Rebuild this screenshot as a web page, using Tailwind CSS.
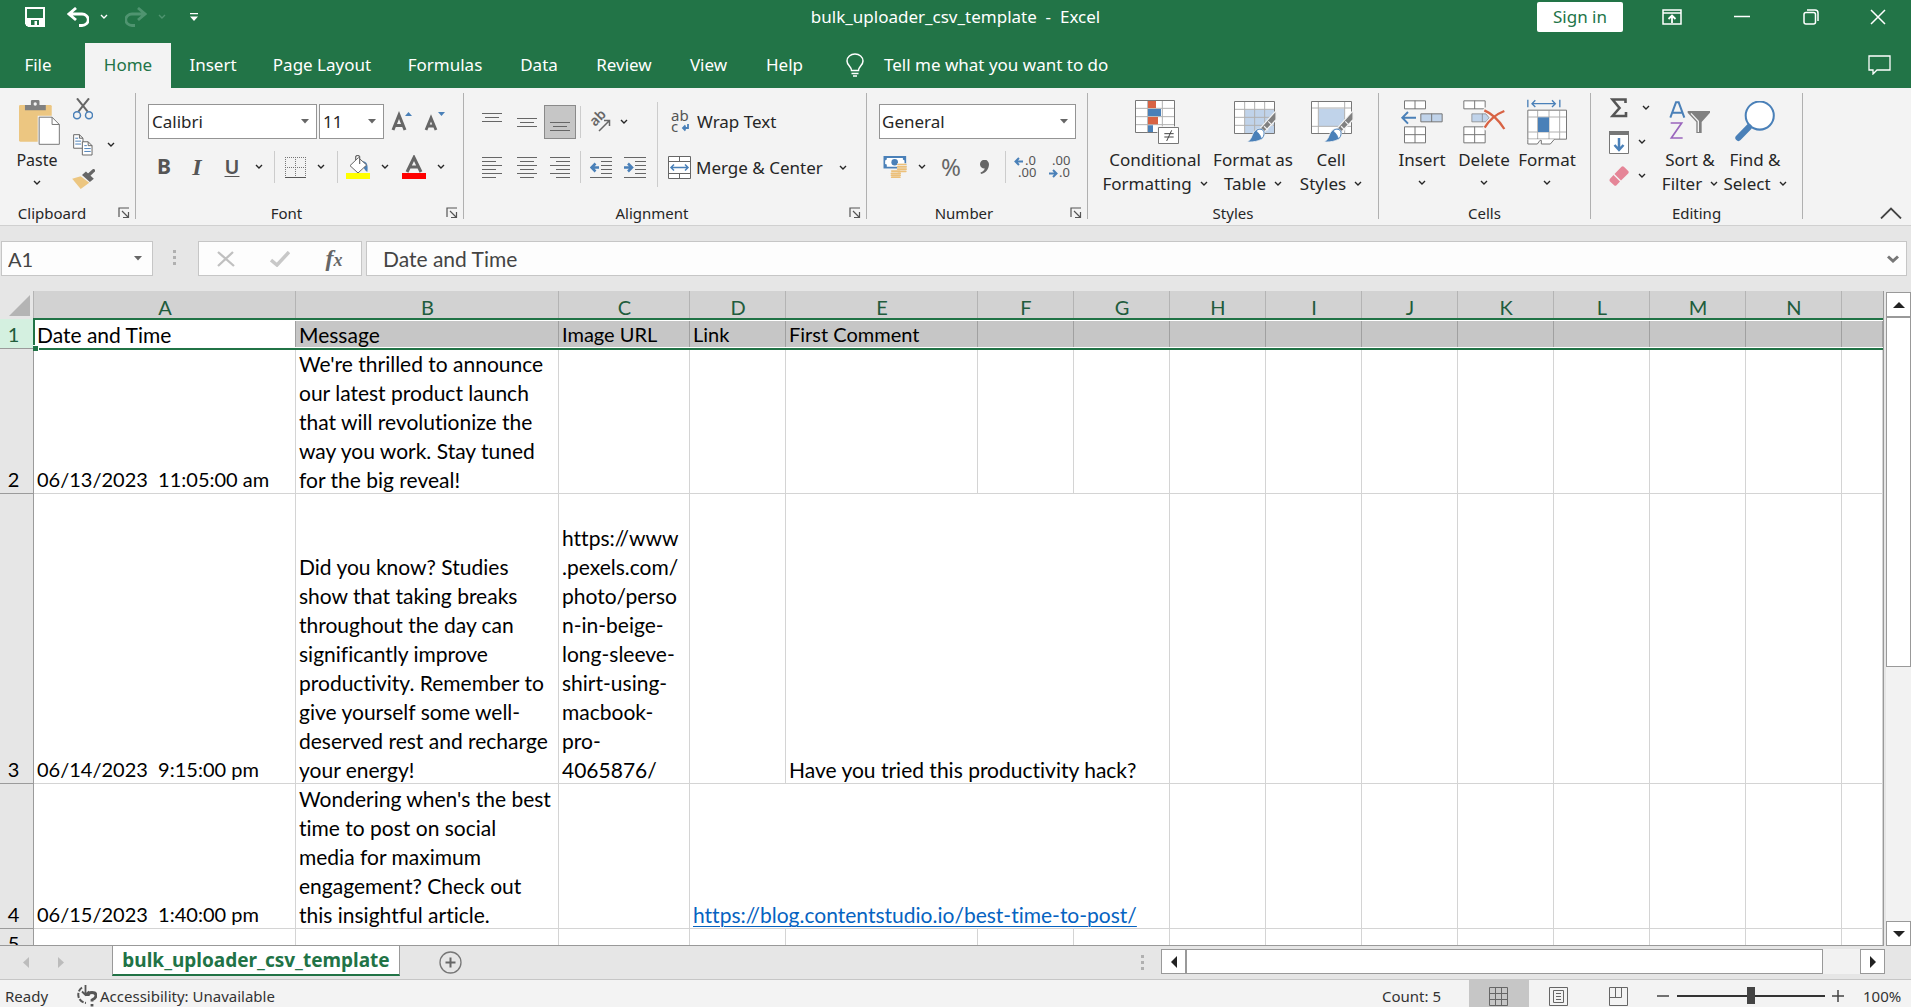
<!DOCTYPE html>
<html lang="en">
<head>
<meta charset="utf-8">
<title>bulk_uploader_csv_template - Excel</title>
<script src="https://cdn.jsdelivr.net/npm/@tailwindcss/browser@4"></script>
</head>
<body class="h-screen overflow-hidden bg-[#e6e6e6] text-[#262626]">
<svg class="hidden">
  <symbol id="chev" viewBox="0 0 8 6"><path d="M1 1l3 3 3-3" fill="none" stroke="currentColor" stroke-width="1.4"/></symbol>
  <symbol id="launch" viewBox="0 0 12 12"><path d="M1 10V1h10M4 4l6 6M10.500 5v5.500H5" fill="none" stroke="#555" stroke-width="1.200"/></symbol>
  <symbol id="tri" viewBox="0 0 8 5"><path d="M0 0h8L4 4.500z" fill="#666"/></symbol>
  <symbol id="brush" viewBox="0 0 100 108"><path d="M98 0v30L58 73 44 60z" fill="#808080" stroke="#f3f3f3" stroke-width="4"/><path d="M72 36l14 14M58 52l14 14" stroke="#f3f3f3" stroke-width="4"/><path d="M0 105c18-8 16-25 27-38 14-14 38-6 32 14-5 20-30 24-59 24z" fill="#4a80b8" stroke="#f3f3f3" stroke-width="3"/><path d="M32 68c8-10 25-8 26 6 0 9-3 16-9 20-3-12-9-18-17-26z" fill="#fff" stroke="#4a80b8" stroke-width="3"/></symbol>
</svg>
<div class="flex h-full flex-col font-['Noto_Sans','Open_Sans',sans-serif] text-[16px]">

  <!-- Title bar -->
  <header class="shrink-0 bg-[#227447] text-white">
    <div class="grid h-[43px] grid-cols-[1fr_auto_1fr] items-start">
      <div class="flex h-[34px] items-center pl-[25px]">
        <button aria-label="Save" class="mr-[22px]"><svg class="h-5 w-5" viewBox="0 0 20 20"><path fill="none" stroke="#fff" stroke-width="2" d="M1 1h18v18H3.500L1 16.500z"/><path fill="#fff" d="M1 11h18v8H1z"/><path fill="#227447" d="M6 13h8v5h-2v-4h-2.500v4H6z"/></svg></button>
        <button aria-label="Undo" class="mr-[11px]"><svg class="h-5 w-[22px]" viewBox="0 0 22 20"><path d="M9 1L2 7l7 6M2.500 7H15a6 5.500 0 0 1 0 11.500h-3" fill="none" stroke="#fff" stroke-width="2.800"/></svg></button>
        <button aria-label="Undo options" class="mr-[17px]"><svg class="h-[6px] w-2"><use href="#chev"/></svg></button>
        <button aria-label="Redo" class="mr-[11px] text-[#4f9470]"><svg class="h-5 w-[22px]" viewBox="0 0 22 20"><path d="M13 1l7 6-7 6M19.500 7H7a6 5.500 0 0 0 0 11.500h3" fill="none" stroke="currentColor" stroke-width="2.800"/></svg></button>
        <button aria-label="Redo options" class="mr-[24px] text-[#4f9470]"><svg class="h-[6px] w-2"><use href="#chev"/></svg></button>
        <button aria-label="Customize toolbar"><svg class="h-2 w-2" viewBox="0 0 8 8"><path fill="#fff" d="M0 0h8v1.300H0zM0 3.500h8L4 8z"/></svg></button>
      </div>
      <h1 class="h-[34px] text-[17px] leading-[34px] whitespace-pre">bulk_uploader_csv_template  -  Excel</h1>
      <div class="flex h-[34px] items-center justify-end">
        <button class="mr-[14px] h-[30px] w-[86px] rounded-[2px] bg-white text-[17px] text-[#227447]">Sign in</button>
        <button aria-label="Ribbon display options" class="grid h-[30px] w-[70px] place-items-center"><svg class="h-4 w-5" viewBox="0 0 20 16"><path d="M1 1h18v14H1zM1 4h18" fill="none" stroke="#fff" stroke-width="1.500"/><path d="M10 14V7M6.500 10L10 6.500l3.500 3.500" fill="none" stroke="#fff" stroke-width="1.800"/></svg></button>
        <button aria-label="Minimize" class="grid h-[30px] w-[69px] place-items-center"><svg class="h-4 w-4" viewBox="0 0 16 16"><path d="M0 7.500h16" stroke="#fff" stroke-width="1.500"/></svg></button>
        <button aria-label="Restore" class="grid h-[30px] w-[69px] place-items-center"><svg class="h-4 w-4" viewBox="0 0 16 16"><rect x="1" y="3.500" width="11.500" height="11.500" rx="2" fill="none" stroke="#fff" stroke-width="1.500"/><path d="M4 1h8q3 0 3 3v8" fill="none" stroke="#fff" stroke-width="1.500"/></svg></button>
        <button aria-label="Close" class="grid h-[30px] w-[66px] place-items-center"><svg class="h-4 w-4" viewBox="0 0 16 16"><path d="M1 1l14 14M15 1L1 15" stroke="#fff" stroke-width="1.500"/></svg></button>
      </div>
    </div>
    <nav class="flex h-[45px] items-stretch text-[17px] [&>button]:pb-[2px]">
      <button class="w-[85px] pr-[9px]">File</button>
      <button class="w-[86px] bg-[#f3f3f3] text-[#227447]">Home</button>
      <button class="w-[84px]">Insert</button>
      <button class="w-[134px]">Page Layout</button>
      <button class="w-[112px]">Formulas</button>
      <button class="w-[76px]">Data</button>
      <button class="w-[94px]">Review</button>
      <button class="w-[75px]">View</button>
      <button class="w-[77px]">Help</button>
      <button class="ml-[23px] flex items-center gap-5"><svg class="h-6 w-[18px]" viewBox="0 0 18 24"><path d="M5.500 17.500c0-4-4.500-5-4.500-9.500a8 7 0 0 1 16 0c0 4.500-4.500 5.500-4.500 9.500zM5.500 20.500h7M7 23h4" fill="none" stroke="#fff" stroke-width="1.500"/></svg><span>Tell me what you want to do</span></button>
      <button aria-label="Comments" class="ml-auto mr-[20px]"><svg class="h-5 w-[23px]" viewBox="0 0 23 20"><path d="M1 1h21v14H9l-4 4v-4H1z" fill="none" stroke="#fff" stroke-width="1.300"/></svg></button>
    </nav>
  </header>

  <!-- Ribbon -->
  <section class="flex h-[138px] shrink-0 border-b border-[#d0d0d0] bg-[#f3f3f3] whitespace-nowrap">
    <div class="flex w-[135px] shrink-0 flex-col">
      <div class="flex flex-1 pl-3">
        <button class="flex w-[50px] flex-col items-center pt-2 leading-6">
          <span class="grid h-[52px] place-items-center"><svg class="ml-1 h-[45px] w-[41px]" viewBox="60 297 124 136"><rect x="60" y="312" width="99" height="111" rx="4" fill="#ecc681"/><path d="M78 328v-16h18v-11q0-4 4-4h18q4 0 4 4v11h19v16z" fill="#808080"/><circle cx="109" cy="309" r="5" fill="#f3f3f3"/><path d="M119 347h41l24 24v62h-65z" fill="#fff" stroke="#f3f3f3" stroke-width="5"/><path d="M121 349h39l22 22v60h-61zM160 349v22h22" fill="#fff" stroke="#777" stroke-width="3"/></svg></span>
          <span>Paste</span><svg class="mt-2 h-[6px] w-2"><use href="#chev"/></svg>
        </button>
        <div class="flex flex-col pl-[9px] pt-1">
          <button aria-label="Cut" class="grid h-[34px] w-6 place-items-center"><svg class="h-[22px] w-5" viewBox="219 295 60 66"><path d="M231 296l32 40M267 296l-32 40" stroke="#666" stroke-width="6"/><circle cx="231" cy="347" r="10.500" fill="none" stroke="#4a80b8" stroke-width="4.500"/><circle cx="267" cy="347" r="10.500" fill="none" stroke="#4a80b8" stroke-width="4.500"/></svg></button>
          <div class="flex h-[38px] items-center"><button aria-label="Copy" class="grid w-6 place-items-center"><svg class="h-[22px] w-5" viewBox="221 398 62 68"><g fill="#fff" stroke="#666" stroke-width="3"><path d="M223 400h18l11 11v31h-29zM241 400v11h11"/><path d="M250 422h18l12 12v29h-30zM268 422v12h12"/></g><path d="M228 411h9M228 420h18M228 429h18M256 434h8M256 443h20M256 452h20" stroke="#4a80b8" stroke-width="3"/></svg></button><button aria-label="Copy options" class="grid w-[32px] place-items-center"><svg class="h-[6px] w-2"><use href="#chev"/></svg></button></div>
          <button aria-label="Format Painter" class="grid h-[30px] w-6 place-items-center"><svg class="h-5 w-[23px]" viewBox="217 506 69 61"><path d="M217 536l26-8 26 20-26 19z" fill="#ecc681"/><path d="M247 524l12-10 24 22-12 10z" fill="#666"/><path d="M266 526l16-15" stroke="#666" stroke-width="10" stroke-linecap="round"/></svg></button>
        </div>
      </div>
      <div class="flex h-6 items-center text-[15px]"><span class="flex-1 text-center">Clipboard</span><button aria-label="Clipboard settings" class="mr-[5px] w-[26px] pl-[14px]"><svg class="h-3 w-3"><use href="#launch"/></svg></button></div>
    </div>
    <div class="mb-[6px] mt-[5px] w-px shrink-0 bg-[#b0b0b0]"></div>

    <div class="flex w-[327px] shrink-0 flex-col">
      <div class="flex-1 pl-3 pt-4">
        <div class="flex h-[35px]">
          <div class="grid w-[169px] items-center border border-[#949494] bg-white"><select aria-label="Font" class="col-start-1 row-start-1 h-full w-full appearance-none bg-transparent pl-[3px] text-[17px]"><option>Calibri</option></select><svg class="col-start-1 row-start-1 mr-[7px] h-[5px] w-2 justify-self-end"><use href="#tri"/></svg></div>
          <div class="ml-[2px] grid w-[65px] items-center border border-[#949494] bg-white"><select aria-label="Font size" class="col-start-1 row-start-1 h-full w-full appearance-none bg-transparent pl-[3px] text-[17px]"><option>11</option></select><svg class="col-start-1 row-start-1 mr-[7px] h-[5px] w-2 justify-self-end"><use href="#tri"/></svg></div>
          <button aria-label="Increase font size" class="grid w-[35px] place-items-center"><svg class="h-6 w-6" viewBox="0 0 24 24"><path d="M3 20l6-15 6 15M5.500 15.500h7.500" fill="none" stroke="#666" stroke-width="3"/><path d="M15 6h7l-3.500-4z" fill="#4a80b8"/></svg></button>
          <button aria-label="Decrease font size" class="grid w-8 place-items-center"><svg class="h-6 w-6" viewBox="0 0 24 24"><path d="M3 20L8 8l5 12M5 16h6" fill="none" stroke="#666" stroke-width="2.800"/><path d="M15 2h7l-3.500 4z" fill="#4a80b8"/></svg></button>
        </div>
        <div class="mt-[11px] flex h-[34px] items-center text-[#555]">
          <button class="w-8 text-[21px] font-bold">B</button>
          <button class="w-[34px] font-['Liberation_Serif',serif] text-[24px] font-bold italic">I</button>
          <button class="w-9 text-[20px] font-semibold underline decoration-1 underline-offset-2">U</button>
          <button aria-label="Underline options" class="grid w-[18px] place-items-center text-[#262626]"><svg class="h-[6px] w-2"><use href="#chev"/></svg></button>
          <div class="mx-[6px] h-8 w-px bg-[#ccc]"></div>
          <button aria-label="Borders" class="grid w-7 place-items-center"><svg class="h-[21px] w-[21px]" viewBox="0 0 21 21"><path d="M0 .500h21M0 10.500h21M.500 0v20M10.500 0v20M20.500 0v20" fill="none" stroke="#777" stroke-dasharray="1 1"/><path d="M0 20.500h21" stroke="#555"/></svg></button>
          <button aria-label="Border options" class="grid w-6 place-items-center text-[#262626]"><svg class="h-[6px] w-2"><use href="#chev"/></svg></button>
          <div class="mx-1 h-8 w-px bg-[#ccc]"></div>
          <button aria-label="Fill color" class="grid w-8 place-items-center"><svg class="h-6 w-6" viewBox="1038 465 72 72"><path d="M1086 484c12-2 20 8 16 32-8-4-10-14-16-18z" fill="#4a80b8"/><path d="M1075 473l25 22-26 24-24-22z" fill="#fff" stroke="#666" stroke-width="3"/><path d="M1067 480v-10q6-8 12 0v22" fill="none" stroke="#666" stroke-width="3.500"/><path d="M1038 519h72v18h-72z" fill="#ff0"/></svg></button>
          <button aria-label="Fill color options" class="grid w-[22px] place-items-center text-[#262626]"><svg class="h-[6px] w-2"><use href="#chev"/></svg></button>
          <button aria-label="Font color" class="grid w-9 place-items-center"><svg class="h-6 w-6" viewBox="0 0 24 24"><path d="M5 17l7-14.500L19 17M8 12h8" fill="none" stroke="#666" stroke-width="3"/><path d="M0 18h24v6H0z" fill="red"/></svg></button>
          <button aria-label="Font color options" class="grid w-[18px] place-items-center text-[#262626]"><svg class="h-[6px] w-2"><use href="#chev"/></svg></button>
        </div>
      </div>
      <div class="flex h-6 items-center text-[15px]"><span class="flex-1 text-center">Font</span><button aria-label="Font settings" class="mr-[5px] w-[21px] pl-[9px]"><svg class="h-3 w-3"><use href="#launch"/></svg></button></div>
    </div>
    <div class="mb-[6px] mt-[5px] w-px shrink-0 bg-[#b0b0b0]"></div>

    <div class="flex w-[402px] shrink-0 flex-col">
      <div class="flex flex-1 pl-[10px]">
        <div class="w-[183px] pt-[17px]">
          <div class="flex h-[34px] items-center">
            <button aria-label="Top Align" class="grid w-[35px] place-items-center"><svg class="h-[22px] w-5" viewBox="0 0 20 22"><path d="M0 2.500h20M3 6.500h14M0 10.500h20" stroke="#666"/></svg></button>
            <button aria-label="Middle Align" class="grid w-[35px] place-items-center"><svg class="h-[22px] w-5" viewBox="0 0 20 22"><path d="M0 7.500h20M3 11.500h14M0 15.500h20" stroke="#666"/></svg></button>
            <button aria-label="Bottom Align" class="grid h-[34px] w-8 place-items-center border border-[#8a8a8a] bg-[#c6c6c6]"><svg class="h-[22px] w-5" viewBox="0 0 20 22"><path d="M0 11.500h20M3 15.500h14M0 19.500h20" stroke="#666"/></svg></button>
            <div class="ml-1 h-8 w-px bg-[#ccc]"></div>
            <button aria-label="Orientation" class="ml-[3px] grid w-[34px] place-items-center"><svg class="h-6 w-6 overflow-visible" viewBox="0 0 24 24"><text x="0" y="0" transform="translate(6 17) rotate(-45)" font-size="14" font-weight="600" fill="#666">ab</text><path d="M10 21L20 11M15 10.500h5.500V16" fill="none" stroke="#666" stroke-width="1.500"/></svg></button>
            <button aria-label="Orientation options" class="grid w-3 place-items-center"><svg class="h-[6px] w-2"><use href="#chev"/></svg></button>
          </div>
          <div class="mt-[11px] flex h-[34px] items-center">
            <button aria-label="Align Left" class="grid w-[35px] place-items-center"><svg class="h-[22px] w-5" viewBox="0 0 20 22"><path d="M0 1.500h20M0 5.500h14M0 9.500h20M0 13.500h14M0 17.500h20M0 21.500h14" stroke="#666"/></svg></button>
            <button aria-label="Center" class="grid w-[35px] place-items-center"><svg class="h-[22px] w-5" viewBox="0 0 20 22"><path d="M0 1.500h20M3 5.500h14M0 9.500h20M3 13.500h14M0 17.500h20M3 21.500h14" stroke="#666"/></svg></button>
            <button aria-label="Align Right" class="grid w-8 place-items-center"><svg class="h-[22px] w-5" viewBox="0 0 20 22"><path d="M0 1.500h20M6 5.500h14M0 9.500h20M6 13.500h14M0 17.500h20M6 21.500h14" stroke="#666"/></svg></button>
            <div class="ml-1 h-8 w-px bg-[#ccc]"></div>
            <button aria-label="Decrease Indent" class="ml-[3px] grid w-[34px] place-items-center"><svg class="h-[22px] w-[22px]" viewBox="0 0 22 22"><path d="M0 1.500h22M11 5.500h11M11 9.500h11M11 13.500h11M11 17.500h11M0 21.500h22" stroke="#666"/><path d="M9 11.500H2M5.500 7.500l-4 4 4 4" fill="none" stroke="#4a80b8" stroke-width="2.500"/></svg></button>
            <button aria-label="Increase Indent" class="grid w-[34px] place-items-center"><svg class="h-[22px] w-[22px]" viewBox="0 0 22 22"><path d="M0 1.500h22M11 5.500h11M11 9.500h11M11 13.500h11M11 17.500h11M0 21.500h22" stroke="#666"/><path d="M0 11.500h7M4 7.500l4 4-4 4" fill="none" stroke="#4a80b8" stroke-width="2.500"/></svg></button>
          </div>
        </div>
        <div class="mt-[14px] h-[85px] w-px bg-[#ccc]"></div>
        <div class="pl-[10px] pt-[17px] text-[17px]">
          <button class="flex h-[34px] items-center gap-[5px]"><svg class="h-6 w-6 overflow-visible" viewBox="0 0 24 24"><text x="3" y="11" font-size="15" fill="#555">ab</text><text x="3" y="22" font-size="15" fill="#555">c</text><path d="M20 14v4h-5M17.500 15.500L15 18l2.500 2.500" fill="none" stroke="#4a80b8" stroke-width="1.800"/></svg>Wrap Text</button>
          <div class="mt-3 flex h-[34px] items-center"><button class="flex items-center gap-[4px]"><svg class="h-6 w-6" viewBox="0 0 24 24"><path d="M.500.500h22v22H.500zM.500 5.500h22M.500 17.500h22M11.500.500v5M11.500 17.500v5" fill="#fff" stroke="#666"/><path d="M3 11.500h17M6 8.500l-3 3 3 3M17 8.500l3 3-3 3" fill="none" stroke="#4a80b8" stroke-width="1.500"/></svg>Merge &amp; Center</button><button aria-label="Merge options" class="ml-[10px] grid w-5 place-items-center"><svg class="h-[6px] w-2"><use href="#chev"/></svg></button></div>
        </div>
      </div>
      <div class="flex h-6 items-center text-[15px]"><span class="flex-1 text-center">Alignment</span><button aria-label="Alignment settings" class="mr-[5px] w-[21px] pl-[9px]"><svg class="h-3 w-3"><use href="#launch"/></svg></button></div>
    </div>
    <div class="mb-[6px] mt-[5px] w-px shrink-0 bg-[#b0b0b0]"></div>

    <div class="flex w-[220px] shrink-0 flex-col">
      <div class="flex-1 pl-3 pt-4">
        <div class="grid h-[35px] w-[197px] items-center border border-[#949494] bg-white"><select aria-label="Number format" class="col-start-1 row-start-1 h-full w-full appearance-none bg-transparent pl-[2px] text-[17px]"><option>General</option></select><svg class="col-start-1 row-start-1 mr-[7px] h-[5px] w-2 justify-self-end"><use href="#tri"/></svg></div>
        <div class="mt-[11px] flex h-[34px] items-center text-[#666]">
          <button aria-label="Accounting format" class="grid w-8 place-items-center"><svg class="h-[22px] w-6" viewBox="69 228 70 67"><path d="M69 228h69v38H69z" fill="#4a80b8"/><path d="M79 234h49v5l5 3v10l-5 2v7H79v-7l-5-2v-10l5-3z" fill="#fff"/><circle cx="103" cy="247" r="10" fill="#4a80b8"/><path d="M111 250h28v30h-17v15H92v-25h19z" fill="#f3f3f3"/><path d="M113 254h24M112 261h26M112 268h26M113 275h24M94 274h25M93 281h27M93 287h27M94 293h25" stroke="#ecc07a" stroke-width="5" stroke-linecap="round"/></svg></button>
          <button aria-label="Accounting options" class="grid w-[22px] place-items-center text-[#262626]"><svg class="h-[6px] w-2"><use href="#chev"/></svg></button>
          <button class="w-9 text-[24px] leading-[34px]">%</button>
          <button aria-label="Comma style" class="grid w-8 place-items-center"><svg class="h-[14px] w-[10px]" viewBox="0 0 10 14"><path d="M0 4.500A4.500 4.500 0 0 1 9 4c0 5-3 9-8 10l-.500-1.500C3 11.500 4.500 10 4.800 8.500A4.300 4.300 0 0 1 0 4.500z" fill="#666"/></svg></button>
          <div class="ml-1 h-8 w-px bg-[#ccc]"></div>
          <button aria-label="Increase decimal" class="grid w-10 place-items-center"><svg class="h-6 w-6 overflow-visible" viewBox="0 0 24 24"><text x="11" y="10" font-size="13" fill="#555">.0</text><text x="4" y="22" font-size="13" fill="#555">.00</text><path d="M9 6.500H2M5 3L1.500 6.500 5 10" fill="none" stroke="#4a80b8" stroke-width="2"/></svg></button>
          <button aria-label="Decrease decimal" class="grid w-7 place-items-center"><svg class="h-6 w-6 overflow-visible" viewBox="0 0 24 24"><text x="4" y="10" font-size="13" fill="#555">.00</text><text x="11" y="22" font-size="13" fill="#555">.0</text><path d="M1 18.500h7M5 15l3.500 3.500L5 22" fill="none" stroke="#4a80b8" stroke-width="2"/></svg></button>
        </div>
      </div>
      <div class="flex h-6 items-center text-[15px]"><span class="flex-1 text-center">Number</span><button aria-label="Number settings" class="mr-[5px] w-[21px] pl-[9px]"><svg class="h-3 w-3"><use href="#launch"/></svg></button></div>
    </div>
    <div class="mb-[6px] mt-[5px] w-px shrink-0 bg-[#b0b0b0]"></div>

    <div class="flex w-[290px] shrink-0 flex-col">
      <div class="flex flex-1 pl-[13px] pt-2 text-[17px] leading-6">
        <button class="flex w-[108px] flex-col items-center"><span class="grid h-[52px] place-items-center"><svg class="ml-1 h-11 w-11" viewBox="828 57 132 132"><path d="M829.500 58.500h117v96h-117z" fill="#fff" stroke="#777" stroke-width="3"/><path d="M831 82h114M831 107h114M831 131h114M866 60v94M910 60v94" stroke="#b0b0b0" stroke-width="3"/><path d="M867 60h24v21h-24zM867 108h30v22h-30z" fill="#d86344"/><path d="M867 84h39v21h-39zM867 133h15v20h-15z" fill="#4a80b8"/><path d="M895 136h67v54h-67z" fill="#f3f3f3"/><path d="M898.500 139.500h60v48h-60z" fill="#fff" stroke="#777" stroke-width="3"/><path d="M916 158h28M916 168h28M938 148l-15 32" stroke="#444" stroke-width="3"/></svg></span><span>Conditional</span><span class="flex items-center gap-2">Formatting<svg class="h-[6px] w-2"><use href="#chev"/></svg></span></button>
        <button class="flex w-[88px] flex-col items-center"><span class="grid h-[52px] place-items-center"><svg class="ml-[6px] h-[42px] w-11" viewBox="1125 66 132 126"><path d="M1126.500 67.500h120v96h-120z" fill="#fff"/><path d="M1157 92h89v71h-89z" fill="#c0d3ea"/><path d="M1128 91h118M1128 115h118M1128 139h118M1157 69v94M1187 69v94M1217 69v94" stroke="#b0b0b0" stroke-width="3"/><path d="M1126.500 67.500h120v96h-120z" fill="none" stroke="#777" stroke-width="3"/><use href="#brush" x="1159" y="95" width="98" height="97"/></svg></span><span>Format as</span><span class="flex items-center gap-2">Table<svg class="h-[6px] w-2"><use href="#chev"/></svg></span></button>
        <button class="flex w-[68px] flex-col items-center"><span class="grid h-[52px] place-items-center"><svg class="ml-1 h-[42px] w-11" viewBox="1353 57 132 126"><path d="M1354.500 58.500h120v96h-120z" fill="#fff"/><path d="M1376 80h78v53h-78z" fill="#c0d3ea"/><path d="M1356 78h118M1356 133h118M1375 60v94M1454 60v94" stroke="#b0b0b0" stroke-width="3"/><path d="M1354.500 58.500h120v96h-120z" fill="none" stroke="#777" stroke-width="3"/><use href="#brush" x="1387" y="86" width="98" height="97"/></svg></span><span>Cell</span><span class="flex items-center gap-2">Styles<svg class="h-[6px] w-2"><use href="#chev"/></svg></span></button>
      </div>
      <div class="h-6 text-center text-[15px] leading-6">Styles</div>
    </div>
    <div class="mb-[6px] mt-[5px] w-px shrink-0 bg-[#b0b0b0]"></div>

    <div class="flex w-[211px] shrink-0 flex-col">
      <div class="flex flex-1 pl-3 pt-2 text-[17px] leading-6">
        <button class="flex w-[62px] flex-col items-center"><span class="grid h-[52px] place-items-center"><svg class="h-11 w-11" viewBox="87 56 126 132"><path d="M97.500 58.500h63v24h-63zM129 58v25M97.500 136.500h63v48h-63zM97 160h64M129 136v49" fill="#fff" stroke="#777" stroke-width="3"/><path d="M146.500 97.500h64v24h-64zM179 97v25" fill="#c0d3ea" stroke="#777" stroke-width="3"/><path d="M132 109H92M108 92L91 109l17 18" fill="none" stroke="#4a80b8" stroke-width="6"/></svg></span><span>Insert</span><svg class="mt-2 h-[6px] w-2"><use href="#chev"/></svg></button>
        <button class="flex w-[62px] flex-col items-center"><span class="grid h-[52px] place-items-center"><svg class="h-11 w-11" viewBox="274 56 126 132"><path d="M276.500 58.500h64v24h-64zM309 58v25M276.500 136.500h64v48h-64zM276 160h64M309 136v49" fill="#fff" stroke="#777" stroke-width="3"/><path d="M300.500 97.500h42l10 12-10 12h-42zM332 97v25" fill="#c0d3ea" stroke="#777" stroke-width="2"/><path d="M336 83c24 12 46 32 62 60M398 89c-26 10-48 30-60 56" fill="none" stroke="#f3f3f3" stroke-width="14"/><path d="M338 87c24 10 44 30 60 56M398 89c-26 10-46 28-59 50" fill="none" stroke="#d86344" stroke-width="7"/></svg></span><span>Delete</span><svg class="mt-2 h-[6px] w-2"><use href="#chev"/></svg></button>
        <button class="flex w-[64px] flex-col items-center"><span class="grid h-[52px] place-items-center"><svg class="h-[46px] w-[42px]" viewBox="451 52 120 138"><path d="M453.500 54v23M549.500 54v23M466 66h70M476 56l-10 10 10 10M526 56l10 10-10 10" fill="none" stroke="#4a80b8" stroke-width="4"/><path d="M453.500 85.500h116v87h-116z" fill="#fff"/><path d="M455 106h114M455 151h114M483 87v85M517 87v85M549 87v85" stroke="#b0b0b0" stroke-width="3"/><path d="M453.500 85.500h116v87h-116z" fill="none" stroke="#777" stroke-width="3"/><path d="M484 107h33v44h-33z" fill="#4a80b8"/><path d="M453.500 173v14H482l8-11h4v11h27l12-14" fill="#fff" stroke="#777" stroke-width="3"/></svg></span><span>Format</span><svg class="mt-2 h-[6px] w-2"><use href="#chev"/></svg></button>
      </div>
      <div class="h-6 text-center text-[15px] leading-6">Cells</div>
    </div>
    <div class="mb-[6px] mt-[5px] w-px shrink-0 bg-[#b0b0b0]"></div>

    <div class="flex w-[211px] shrink-0 flex-col">
      <div class="flex flex-1 pl-4 text-[17px] leading-6">
        <div class="flex w-[52px] flex-col pt-1">
          <div class="flex h-[32px] items-center"><button aria-label="AutoSum" class="grid w-6 place-items-center"><svg class="h-5 w-[18px]" viewBox="0 0 18 20"><path d="M15.500 5V1.500h-13l7 8.500-7 8h13.500V14" fill="none" stroke="#555" stroke-width="2.600"/></svg></button><button aria-label="AutoSum options" class="ml-[4px] grid w-[22px] place-items-center"><svg class="h-[6px] w-2"><use href="#chev"/></svg></button></div>
          <div class="flex h-[36px] items-center"><button aria-label="Fill" class="grid w-6 place-items-center"><svg class="h-[23px] w-5" viewBox="0 0 20 23"><path d="M.500 1h19v21.500H.500z" fill="#fff" stroke="#777"/><path d="M0 0h20v4H0z" fill="#777"/><path d="M10 7v11M5.500 14l4.500 5 4.500-5" fill="none" stroke="#4a80b8" stroke-width="2.500"/></svg></button><button aria-label="Fill options" class="grid w-[22px] place-items-center"><svg class="h-[6px] w-2"><use href="#chev"/></svg></button></div>
          <div class="flex h-[32px] items-center"><button aria-label="Clear" class="grid w-6 place-items-center"><svg class="h-5 w-5" viewBox="0 0 20 20"><path d="M12.500.800q1.200-1 2.400 0l4.300 4.300q1 1.200 0 2.400L12 14.500 5.500 8zM4.500 9l6.500 6.500-3.500 3.700q-1.200 1-2.400 0L1 15.400q-1-1.200 0-2.600z" fill="#e58597"/></svg></button><button aria-label="Clear options" class="grid w-[22px] place-items-center"><svg class="h-[6px] w-2"><use href="#chev"/></svg></button></div>
        </div>
        <button class="flex w-[62px] flex-col items-center pt-2"><span class="grid h-[52px] place-items-center"><svg class="h-11 w-[42px]" viewBox="866 54 124 132"><path d="M869 107l17-46h8l17 46M876 92h28" fill="none" stroke="#4a80b8" stroke-width="6"/><path d="M870 123h33l-31 45h34" fill="none" stroke="#9a66bd" stroke-width="5"/><path d="M921 87h67v5l-25 28v33h-16v-33l-26-28z" fill="#808080"/><path d="M953 150v-32l-22-24" fill="none" stroke="#f3f3f3" stroke-width="4"/></svg></span><span>Sort &amp;</span><span class="flex items-center gap-2">Filter<svg class="h-[6px] w-2"><use href="#chev"/></svg></span></button>
        <button class="flex w-[68px] flex-col items-center pt-2"><span class="grid h-[52px] place-items-center"><svg class="h-[42px] w-10" viewBox="1060 62 118 124"><circle cx="1133" cy="105" r="41.500" fill="#fff" stroke="#4a80b8" stroke-width="6"/><path d="M1101 139l-31 32" stroke="#4a80b8" stroke-width="18" stroke-linecap="round"/></svg></span><span>Find &amp;</span><span class="flex items-center gap-2">Select<svg class="h-[6px] w-2"><use href="#chev"/></svg></span></button>
      </div>
      <div class="h-6 text-center text-[15px] leading-6">Editing</div>
    </div>
    <div class="mb-[6px] mt-[5px] w-px shrink-0 bg-[#b0b0b0]"></div>
    <button aria-label="Collapse ribbon" class="mb-[6px] ml-auto mr-[9px] self-end"><svg class="h-3 w-[22px]" viewBox="0 0 22 12"><path d="M1 11.500L11 1.500l10 10" fill="none" stroke="#444" stroke-width="1.800"/></svg></button>
  </section>

  <!-- Formula bar -->
  <section class="flex h-[65px] shrink-0 items-start pl-px pr-1 pt-[15px] font-['Lato','Carlito',sans-serif] text-[21px] text-[#444]">
    <div class="grid h-[35px] w-[152px] items-center border border-[#c6c6c6] bg-[#fdfdfd]"><input aria-label="Name box" value="A1" class="col-start-1 row-start-1 h-full w-full bg-transparent pl-[6px] text-[20px] outline-none"><svg class="col-start-1 row-start-1 mr-[10px] h-[5px] w-2 justify-self-end"><use href="#tri"/></svg></div>
    <svg class="ml-[20px] mt-[9px] h-4 w-[3px]" viewBox="0 0 3 16"><path d="M0 0h3v3H0zM0 6h3v3H0zM0 12h3v3H0z" fill="#b0b0b0"/></svg>
    <div class="ml-[22px] flex h-[35px] w-[164px] items-center border border-[#c6c6c6] bg-[#fdfdfd]">
      <button aria-label="Cancel" class="grid w-[54px] place-items-center"><svg class="h-4 w-[18px]" viewBox="0 0 18 16"><path d="M1 1l16 14M16 1L1 15" stroke="#c0c0c0" stroke-width="2.300"/></svg></button>
      <button aria-label="Enter" class="grid w-[54px] place-items-center"><svg class="h-4 w-5" viewBox="0 0 20 16"><path d="M1 9l6 5L19 1" fill="none" stroke="#c8c8c8" stroke-width="3.500"/></svg></button>
      <button aria-label="Insert function" class="w-[54px] font-['Liberation_Serif',serif] text-[24px] font-bold italic leading-8 text-[#666]">f<span class="text-[18px]">x</span></button>
    </div>
    <div class="ml-1 flex h-[35px] flex-1 items-center border border-[#c6c6c6] bg-[#fdfdfd] pr-[7px]"><input aria-label="Formula" value="Date and Time" class="h-full flex-1 bg-transparent pb-px pl-4 outline-none"><button aria-label="Expand formula bar"><svg class="h-2 w-3" viewBox="0 0 12 8"><path d="M1 1.500L6 6l5-4.500" fill="none" stroke="#777" stroke-width="3"/></svg></button></div>
  </section>

  <!-- Worksheet -->
  <main class="flex min-h-0 flex-1">
    <div class="relative min-w-0 flex-1 overflow-hidden border-b border-[#999] bg-white font-['Lato','Carlito',sans-serif] text-[21px] leading-[29px] text-black [font-variant-ligatures:none]">
      <table class="w-full table-fixed border-separate border-spacing-0 whitespace-pre [&_td]:p-0 [&_td]:pl-[3px] [&_td]:align-bottom [&_td]:shadow-[inset_-1px_-1px_0_#d4d4d4] [&_th]:p-0 [&_th]:text-[20px] [&_th]:font-normal">
        <colgroup><col class="w-[34px]"><col class="w-[262px]"><col class="w-[263px]"><col class="w-[131px]"><col class="w-[96px]"><col class="w-[192px]"><col class="w-[96px]"><col class="w-[96px]"><col class="w-[96px]"><col class="w-[96px]"><col class="w-[96px]"><col class="w-[96px]"><col class="w-[96px]"><col class="w-[96px]"><col class="w-[96px]"><col></colgroup>
        <thead>
          <tr class="h-7 leading-6 text-[#215c3c] [&>th]:bg-[#d2d2d2] [&>th]:align-bottom [&>th]:shadow-[inset_-1px_0_0_#b4b4b4]">
            <th class="bg-[#e6e6e6]!"><svg class="mb-[3px] ml-[9px] h-[21px] w-[21px]" viewBox="0 0 21 21"><path d="M21 0v21H0z" fill="#b4b4b4"/></svg></th>
            <th scope="col">A</th><th scope="col">B</th><th scope="col">C</th><th scope="col">D</th><th scope="col">E</th><th scope="col">F</th><th scope="col">G</th><th scope="col">H</th><th scope="col">I</th><th scope="col">J</th><th scope="col">K</th><th scope="col">L</th><th scope="col">M</th><th scope="col">N</th><th class="shadow-none!"></th>
          </tr>
        </thead>
        <tbody class="[&_th]:bg-[#e6e6e6] [&_th]:pr-[7px] [&_th]:align-bottom [&_th]:shadow-[inset_-1px_-1px_0_#9b9b9b]">
          <tr class="h-[30px] [&>td]:bg-[#c6c6c6] [&>td]:shadow-[inset_-1px_0_0_#a0a0a0]!"><th scope="row" class="bg-[#d4f0e0]! text-[#215c3c]">1</th><td class="bg-white!">Date and Time</td><td>Message</td><td class="text-[20px]">Image URL</td><td class="text-[20px]">Link</td><td class="text-[20px]">First Comment</td><td></td><td></td><td></td><td></td><td></td><td></td><td></td><td></td><td></td><td></td></tr>
          <tr class="h-[145px]"><th scope="row">2</th><td class="text-[20px]">06/13/2023  11:05:00 am</td><td>We're thrilled to announce<br>our latest product launch<br>that will revolutionize the<br>way you work. Stay tuned<br>for the big reveal!</td><td></td><td></td><td></td><td></td><td></td><td></td><td></td><td></td><td></td><td></td><td></td><td></td><td></td></tr>
          <tr class="h-[290px]"><th scope="row">3</th><td class="text-[20px]">06/14/2023  9:15:00 pm</td><td>Did you know? Studies<br>show that taking breaks<br>throughout the day can<br>significantly improve<br>productivity. Remember to<br>give yourself some well-<br>deserved rest and recharge<br>your energy!</td><td>https://www<br>.pexels.com/<br>photo/perso<br>n-in-beige-<br>long-sleeve-<br>shirt-using-<br>macbook-<br>pro-<br>4065876/</td><td></td><td colspan="3">Have you tried this productivity hack?</td><td></td><td></td><td></td><td></td><td></td><td></td><td></td><td></td></tr>
          <tr class="h-[145px]"><th scope="row">4</th><td class="text-[20px]">06/15/2023  1:40:00 pm</td><td>Wondering when's the best<br>time to post on social<br>media for maximum<br>engagement? Check out<br>this insightful article.</td><td></td><td colspan="4"><a href="https://blog.contentstudio.io/best-time-to-post/" class="text-[#0563c1] underline decoration-1 underline-offset-3">https://blog.contentstudio.io/best-time-to-post/</a></td><td></td><td></td><td></td><td></td><td></td><td></td><td></td><td></td></tr>
          <tr class="h-[29px]"><th scope="row">5</th><td></td><td></td><td></td><td></td><td></td><td></td><td></td><td></td><td></td><td></td><td></td><td></td><td></td><td></td><td></td></tr>
        </tbody>
      </table>
      <!-- Selection outline with its fill handle -->
      <div class="pointer-events-none absolute left-[33px] right-0 top-[27px] h-8 border-y-2 border-l-2 border-[#217346] shadow-[inset_0_1px_0_#fff,inset_0_-1px_0_#fff]"><div class="absolute -bottom-[3px] -left-[2px] h-[6px] w-[6px] border-r border-t border-white bg-[#217346]"></div></div>
    </div>
    <div class="flex w-7 shrink-0 flex-col border-l border-[#999] pl-[2px] pt-px">
      <button aria-label="Scroll up" class="grid h-[25px] shrink-0 place-items-center border border-[#999] bg-white"><svg class="h-[6px] w-3" viewBox="0 0 12 6"><path d="M0 6l6-6 6 6z" fill="#222"/></svg></button>
      <div class="min-h-0 flex-1 bg-[#f2f2f2]"><div class="h-[58%] border border-[#999] bg-white"></div></div>
      <button aria-label="Scroll down" class="grid h-[25px] shrink-0 place-items-center border border-[#999] bg-white"><svg class="h-[6px] w-3" viewBox="0 0 12 6"><path d="M0 0l6 6 6-6z" fill="#222"/></svg></button>
    </div>
  </main>

  <!-- Sheet tabs and horizontal scroll bar -->
  <section class="flex h-[33px] shrink-0">
    <button aria-label="Previous sheet" class="grid w-[52px] place-items-center"><svg class="h-[11px] w-[6px]" viewBox="0 0 6 11"><path d="M6 0v11L0 5.500z" fill="#bcbcbc"/></svg></button>
    <button aria-label="Next sheet" class="grid w-[18px] place-items-center"><svg class="h-[11px] w-[6px]" viewBox="0 0 6 11"><path d="M0 0v11l6-5.500z" fill="#bcbcbc"/></svg></button>
    <button class="-mt-px ml-[42px] h-[31px] w-[288px] border-x border-b-2 border-x-[#999] border-b-[#217346] bg-white text-[19px] font-bold leading-7 text-[#217346]">bulk_uploader_csv_template</button>
    <button aria-label="New sheet" class="ml-[39px]"><svg class="h-[23px] w-[23px]" viewBox="0 0 23 23"><circle cx="11.500" cy="11.500" r="10.500" fill="none" stroke="#777" stroke-width="1.300"/><path d="M6.500 11.500h10M11.500 6.500v10" stroke="#666" stroke-width="2"/></svg></button>
    <div class="ml-auto flex w-[770px] items-start pt-[3px]">
      <svg class="mr-[17px] mt-[6px] h-4 w-[3px]" viewBox="0 0 3 16"><path d="M0 0h3v3H0zM0 6h3v3H0zM0 12h3v3H0z" fill="#b0b0b0"/></svg>
      <button aria-label="Scroll left" class="grid h-[25px] w-[25px] place-items-center border border-[#999] bg-white"><svg class="h-3 w-[6px]" viewBox="0 0 6 12"><path d="M6 0v12L0 6z" fill="#222"/></svg></button>
      <div class="h-[25px] flex-1 bg-[#f2f2f2]"><div class="h-[25px] w-[94.5%] border border-[#999] bg-white"></div></div>
      <button aria-label="Scroll right" class="mr-[26px] grid h-[25px] w-[25px] place-items-center border border-[#999] bg-white"><svg class="h-3 w-[6px]" viewBox="0 0 6 12"><path d="M0 0v12l6-6z" fill="#222"/></svg></button>
    </div>
  </section>

  <!-- Status bar -->
  <footer class="flex h-[28px] shrink-0 items-stretch border-t border-[#c6c6c6] bg-[#f3f3f3] text-[15px] leading-[33px] text-[#333]">
    <span class="w-[76px] pl-[5px]">Ready</span>
    <button class="flex items-start gap-[3px] whitespace-nowrap"><svg class="mt-[5px] h-[22px] w-[21px]" viewBox="0 0 21 22"><path d="M6 2.500A8.500 8.500 0 0 0 10 18" fill="none" stroke="#555" stroke-width="2" stroke-dasharray="5 1.500"/><path d="M9.500 0v9M6 6.500l3.500 3.500L13 6.500M9.500 10h4" fill="none" stroke="#555" stroke-width="1.800"/><path d="M12 10.500q0-3 4-3t4 3.200q0 2.300-4 4.300v1.500M16 19v2.500" fill="none" stroke="#555" stroke-width="2.800"/></svg>Accessibility: Unavailable</button>
    <span class="ml-auto mr-[28px]">Count: 5</span>
    <button aria-label="Normal view" class="grid w-[60px] place-items-center bg-[#c6c6c6]"><svg class="mt-[6px] h-[19px] w-5" viewBox="0 0 20 19"><path d="M.500.500h18v18H.500zM.500 6.500h18M.500 12.500h18M6.500.500v18M12.500.500v18" fill="none" stroke="#666"/></svg></button>
    <button aria-label="Page layout view" class="grid w-[60px] place-items-center"><svg class="mt-[6px] h-[19px] w-5" viewBox="0 0 20 19"><path d="M.500.500h18v18H.500zM4.500 3.500h10v12h-10zM7 6.500h5M7 9.500h5M7 12.500h5" fill="none" stroke="#666"/></svg></button>
    <button aria-label="Page break preview" class="grid w-[60px] place-items-center"><svg class="mt-[6px] h-[19px] w-5" viewBox="0 0 20 19"><path d="M.500.500h18v18H.500zM.500 10.500h12V.500M6.500.500v10" fill="none" stroke="#666"/></svg></button>
    <button aria-label="Zoom out" class="ml-[8px] w-[12px]"><svg class="mt-[5px] h-3 w-3" viewBox="0 0 12 12"><path d="M0 6h12" stroke="#444" stroke-width="1.500"/></svg></button>
    <input type="range" min="10" max="190" value="100" aria-label="Zoom" class="ml-[8px] mt-[7px] h-[17px] w-[148px] appearance-none bg-transparent [&::-webkit-slider-runnable-track]:h-[2px] [&::-webkit-slider-runnable-track]:bg-[#333] [&::-webkit-slider-thumb]:-mt-[8px] [&::-webkit-slider-thumb]:h-[17px] [&::-webkit-slider-thumb]:w-2 [&::-webkit-slider-thumb]:appearance-none [&::-webkit-slider-thumb]:bg-[#444]">
    <button aria-label="Zoom in" class="ml-[7px] w-[12px]"><svg class="mt-[5px] h-3 w-3" viewBox="0 0 12 12"><path d="M0 6h12M6 0v12" stroke="#444" stroke-width="1.500"/></svg></button>
    <span class="w-[67px] pl-[19px]">100%</span>
  </footer>
</div>
</body>
</html>
